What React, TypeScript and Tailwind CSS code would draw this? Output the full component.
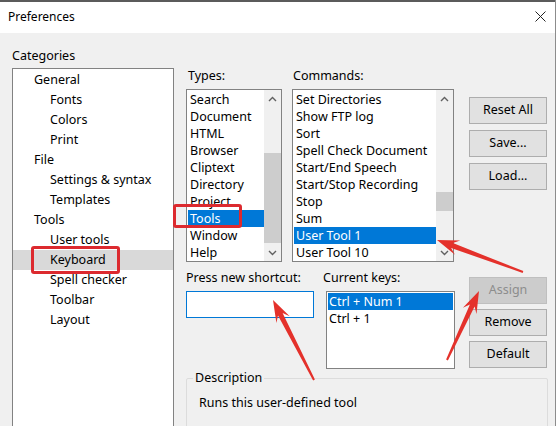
import React from "react";

const tree: [string, number][] = [
  ["General", 1],
  ["Fonts", 2],
  ["Colors", 2],
  ["Print", 2],
  ["File", 1],
  ["Settings & syntax", 2],
  ["Templates", 2],
  ["Tools", 1],
  ["User tools", 2],
  ["Keyboard", 2],
  ["Spell checker", 2],
  ["Toolbar", 2],
  ["Layout", 2],
];

const types = ["Search", "Document", "HTML", "Browser", "Cliptext", "Directory", "Project", "Tools", "Window", "Help"];
const commands = [
  "Set Directories",
  "Show FTP log",
  "Sort",
  "Spell Check Document",
  "Start/End Speech",
  "Start/Stop Recording",
  "Stop",
  "Sum",
  "User Tool 1",
  "User Tool 10",
];

function Chevron({ up }: { up?: boolean }) {
  return (
    <svg width="9" height="6" viewBox="0 0 9 6">
      {up ? (
        <polyline points="1,5 4.5,1.5 8,5" fill="none" stroke="#606060" strokeWidth="1.4" />
      ) : (
        <polyline points="1,1 4.5,4.5 8,1" fill="none" stroke="#606060" strokeWidth="1.4" />
      )}
    </svg>
  );
}

function ScrollBar({ thumb }: { thumb: string }) {
  return (
    <div className="flex w-[17px] flex-col bg-[#f0f0f0]">
      <div className="flex h-[17px] items-center justify-center">
        <Chevron up />
      </div>
      <div className="flex-1">
        <div className={"bg-[#cdcdcd] " + thumb} />
      </div>
      <div className="flex h-[17px] items-center justify-center">
        <Chevron />
      </div>
    </div>
  );
}

function ListBox({ items, selected, thumb, className }: { items: string[]; selected: string; thumb: string; className: string }) {
  return (
    <div className={"flex border border-[#828282] bg-white " + className}>
      <div className="flex-1 overflow-hidden pl-[1px] pt-[1px]">
        {items.map((t) => (
          <div
            key={t}
            className={
              "h-[17px] whitespace-nowrap pl-[2px] leading-[17px] " +
              (t === selected ? "bg-[#0078d7] text-white" : "")
            }
          >
            {t}
          </div>
        ))}
      </div>
      <ScrollBar thumb={thumb} />
    </div>
  );
}

function Btn({ label, disabled }: { label: string; disabled?: boolean }) {
  return (
    <div
      className={
        "flex h-[27px] items-center justify-center border " +
        (disabled
          ? "border-[#bfbfbf] bg-[#cccccc] text-[#8d8d8d]"
          : "border-[#adadad] bg-[#e1e1e1] text-black")
      }
    >
      {label}
    </div>
  );
}

function arrow(tx: number, ty: number, hx: number, hy: number) {
  const dx = hx - tx;
  const dy = hy - ty;
  const L = Math.hypot(dx, dy);
  const ux = dx / L;
  const uy = dy / L;
  const nx = -uy;
  const ny = ux;
  const hl = 22;
  const bx = hx - ux * (hl - 6);
  const by = hy - uy * (hl - 6);
  const wx = hx - ux * hl;
  const wy = hy - uy * hl;
  const p = (x: number, y: number) => `${x.toFixed(1)},${y.toFixed(1)}`;
  return [
    p(tx + nx * 1, ty + ny * 1),
    p(bx + nx * 2.6, by + ny * 2.6),
    p(wx + nx * 7.5, wy + ny * 7.5),
    p(hx, hy),
    p(wx - nx * 7.5, wy - ny * 7.5),
    p(bx - nx * 2.6, by - ny * 2.6),
    p(tx - nx * 1, ty - ny * 1),
  ].join(" ");
}

export default function App() {
  return (
    <div className="relative h-[426px] w-[556px] overflow-hidden border-r border-[#8c8c8c] bg-[#f0f0f0] font-['Noto_Sans',sans-serif] text-[12.5px] text-black">
      <div className="h-[2px] bg-[#5b5b5b]" />
      <div className="flex h-[31px] items-center justify-between bg-white pb-[2px] pl-[8px] pr-[9px] text-[12px]">
        <span>Preferences</span>
        <svg width="11" height="11" viewBox="0 0 11 11">
          <line x1="0.5" y1="0.5" x2="10.5" y2="10.5" stroke="#222" strokeWidth="1" />
          <line x1="10.5" y1="0.5" x2="0.5" y2="10.5" stroke="#222" strokeWidth="1" />
        </svg>
      </div>

      <div className="flex">
        {/* Categories */}
        <div className="ml-[12px] w-[162px]">
          <div className="mt-[14px] h-[18px] leading-[18px]">Categories</div>
          <div className="mt-[3px] h-[370px] border border-[#828282] bg-white pt-[1px]">
            {tree.map(([t, lvl]) => (
              <div
                key={t}
                className={
                  "h-[20px] leading-[20px] " +
                  (lvl === 1 ? "pl-[21px] " : "pl-[37px] ") +
                  (t === "Keyboard" ? "bg-[#d9d9d9]" : "")
                }
              >
                {t}
              </div>
            ))}
          </div>
        </div>

        {/* Right side */}
        <div className="ml-[12px] flex flex-col">
          <div className="mt-[34px] flex">
            <div className="w-[96px]">
              <div className="h-[18px] pl-[2px] leading-[18px]">Types:</div>
              <ListBox items={types} selected="Tools" thumb="mt-[46px] h-[90px]" className="mt-[4px] h-[173px]" />
            </div>
            <div className="ml-[10px] w-[162px]">
              <div className="h-[18px] pl-[1px] leading-[18px]">Commands:</div>
              <ListBox items={commands} selected="User Tool 1" thumb="mt-[85px] h-[19px]" className="mt-[4px] h-[173px]" />
            </div>
            <div className="ml-[15px] flex w-[78px] flex-col gap-[6px] pt-[30px]">
              <Btn label="Reset All" />
              <Btn label="Save..." />
              <Btn label="Load..." />
            </div>
          </div>

          <div className="mt-[7px] flex">
            <div className="w-[128px]">
              <div className="h-[18px] whitespace-nowrap leading-[18px]">Press new shortcut:</div>
              <div className="mt-[4px] h-[27px] border border-[#0078d7] bg-white" />
            </div>
            <div className="ml-[12px] w-[129px]">
              <div className="-ml-[3px] h-[18px] leading-[18px]">Current keys:</div>
              <div className="mt-[4px] h-[78px] border border-[#828282] bg-white px-[1px] pt-[1px]">
                <div className="h-[17px] bg-[#0078d7] pl-[1px] leading-[17px] text-white">Ctrl + Num 1</div>
                <div className="h-[17px] pl-[1px] leading-[17px]">Ctrl + 1</div>
              </div>
            </div>
            <div className="ml-[14px] flex w-[78px] flex-col gap-[5px] pt-[8px]">
              <Btn label="Assign" disabled />
              <Btn label="Remove" />
              <Btn label="Default" />
            </div>
          </div>

          <fieldset className="h-[80px] w-[362px] rounded-[2px] border border-[#dcdcdc]">
            <legend className="ml-[6px] px-[2px] leading-[18px]">Description</legend>
            <div className="mt-[7px] pl-[12px] leading-[18px]">Runs this user-defined tool</div>
          </fieldset>
        </div>
      </div>

      {/* Annotations */}
      <div className="absolute left-[31px] top-[246px] h-[28px] w-[89px] rounded-[3px] border-[3px] border-[#dc2a2f]" />
      <div className="absolute left-[173px] top-[204px] h-[24px] w-[69px] rounded-[3px] border-[3px] border-[#dc2a2f]" />
      <svg className="pointer-events-none absolute left-0 top-0" width="556" height="426">
        <polygon points={arrow(523, 272, 437, 240)} fill="#e4312b" />
        <polygon points={arrow(447, 360, 479, 291)} fill="#e4312b" />
        <polygon points={arrow(314, 380, 273, 300)} fill="#e4312b" />
      </svg>
    </div>
  );
}
